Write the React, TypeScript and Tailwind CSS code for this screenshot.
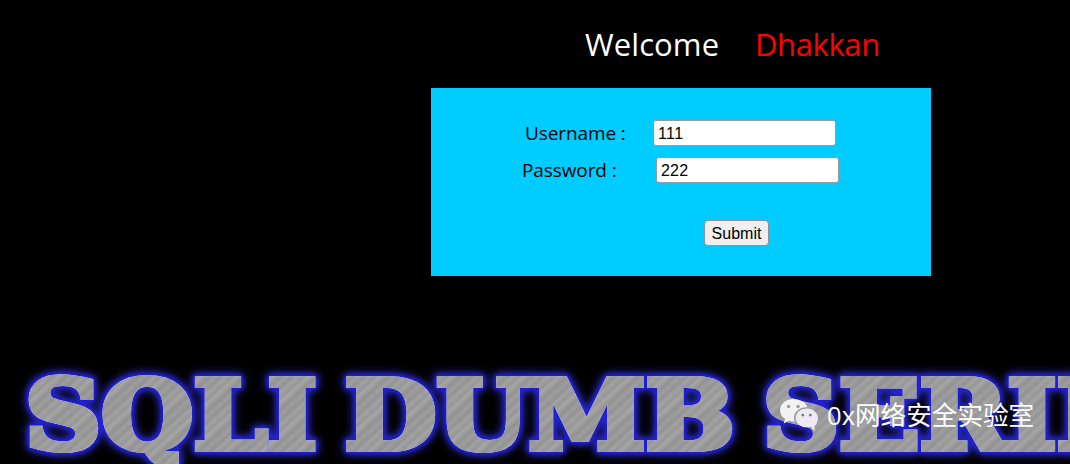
import React from 'react';

const WeChatIcon = () => (
  <svg width="40" height="36" viewBox="0 0 42 38" className="shrink-0">
    <path d="M15 1C7 1 1 6.200 1 12.800c0 3.800 2 7 5.200 9.200L5 27l5.400-3c1.600.5 3 .7 4.600.7h1.500c-.5-1.300-.8-2.600-.8-4 0-6.200 5.800-11 13-11h1.200C28.500 4.800 22.400 1 15 1z" fill="#f2f2f2" />
    <path d="M41 21c0-5.600-5.400-10-11.800-10S17.500 15.400 17.500 21s5.400 10 11.700 10c1.400 0 2.800-.2 4-.6L38 35l-1-5c2.500-2 4-5 4-9z" fill="#ecebf5" />
    <circle cx="10" cy="9" r="1.800" fill="#9a9a9a" />
    <circle cx="20" cy="9" r="1.800" fill="#9a9a9a" />
    <circle cx="25" cy="18" r="1.500" fill="#777777" />
    <circle cx="33" cy="18" r="1.500" fill="#777777" />
  </svg>
);

const App = () => {
  return (
    <div className="relative w-[1070px] h-[464px] overflow-hidden bg-black font-['Open_Sans','Noto_Sans',sans-serif]">
      <div className="flex items-baseline pl-[585px] pt-[20px] h-[88px] text-[31px] leading-[48px]">
        <span className="text-white w-[171px] tracking-[0.1px]">Welcome</span>
        <span className="text-[#ff0000] tracking-[-0.4px] -ml-[1px]">Dhakkan</span>
      </div>

      <div className="ml-[431px] w-[500px] h-[188px] bg-[#00ccff] pt-[32px] text-black">
        <div className="flex items-center h-[26px] pl-[94px] text-[19px] tracking-[-0.1px]">
          <span className="w-[128px]">Username :</span>
          <input
            readOnly
            value="111"
            className="w-[183px] h-[26px] bg-white border border-[#999999] rounded-[3px] pl-[4px] pt-[2px] text-[16px] tracking-[0.4px] font-['Liberation_Sans',sans-serif]"
          />
        </div>
        <div className="flex items-center h-[26px] mt-[11px] pl-[91px] text-[19px] tracking-[-0.1px]">
          <span className="w-[134px]">Password :</span>
          <input
            readOnly
            value="222"
            className="w-[183px] h-[26px] bg-white border border-[#999999] rounded-[3px] pl-[4px] pt-[2px] text-[16px] tracking-[0.2px] font-['Liberation_Sans',sans-serif]"
          />
        </div>
        <div className="pl-[273px] mt-[37px]">
          <button className="w-[65px] h-[26px] pt-[2px] bg-[#efefef] border border-[#8f8f9d] rounded-[4px] text-[16px] leading-none font-['Liberation_Sans',sans-serif]">
            Submit
          </button>
        </div>
      </div>

      <div className="pl-[25px] mt-[84px] whitespace-nowrap">
        <span className="inline-block origin-left scale-x-[1.1] text-[96px] leading-[112px] font-bold [word-spacing:-8px] font-['DejaVu_Serif',serif] text-transparent bg-clip-text bg-[repeating-linear-gradient(135deg,#939393_0px,#a2a2a2_3px,#979797_7px,#a6a6a6_10px,#929292_15px,#9e9e9e_19px,#939393_23px)] [-webkit-text-stroke:6px_transparent] [filter:drop-shadow(0_0_0.5px_#e8e8f0)_drop-shadow(0_0_1px_#1c1cd8)_drop-shadow(0_0_1px_#1c1cd8)_drop-shadow(0_0_2px_#1c1cd8)_drop-shadow(0_0_4px_#3a3aff)]">
          SQLI DUMB SERIES
        </span>
      </div>

      <div className="absolute left-[779px] top-[396px] flex items-center gap-[8px]">
        <WeChatIcon />
        <span className="text-white text-[25.6px] leading-[40px] font-['Open_Sans','Noto_Sans_CJK_SC',sans-serif]">0x网络安全实验室</span>
      </div>
    </div>
  );
};

export default App;
